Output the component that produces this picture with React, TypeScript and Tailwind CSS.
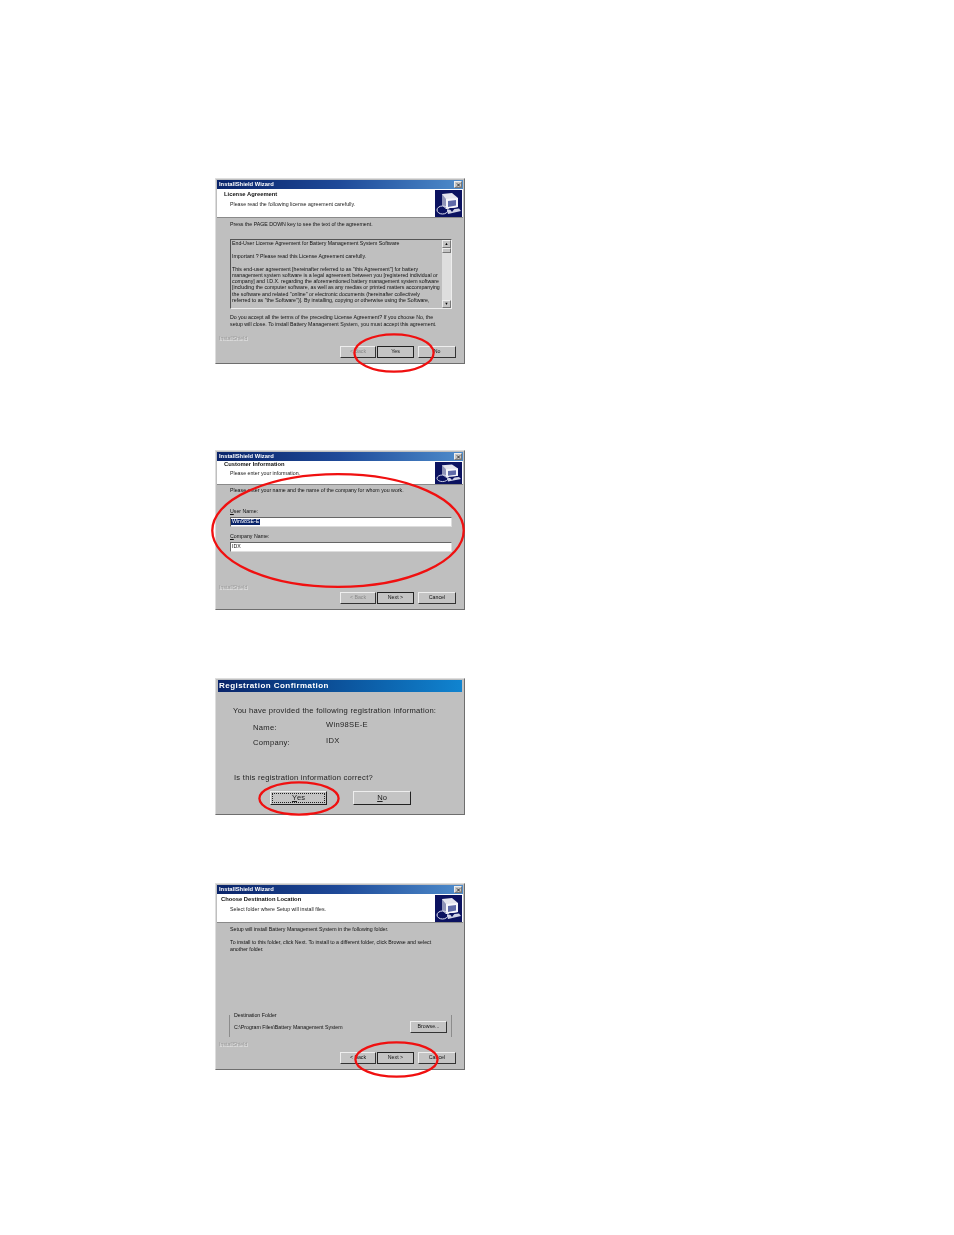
import type { ReactNode } from "react"

const font = "font-['Liberation_Sans',Arial,sans-serif]"

function TitleBar() {
  return (
    <div className="mx-[1px] mt-[1px] h-[9px] flex items-center justify-between pl-[2px] pr-[1px] bg-gradient-to-r from-[#0a246a] via-[#1f4a99] to-[#4f8ccb]">
      <span className="text-[5.8px] leading-none font-bold text-white">InstallShield Wizard</span>
      <span className="w-[8px] h-[7px] bg-[#c6c6c6] border border-[#777] border-t-[#eee] border-l-[#eee] flex items-center justify-center">
        <svg viewBox="0 0 6 5" className="w-[5px] h-[4px]">
          <path d="M1 0.5 L5 4.5 M5 0.5 L1 4.5" stroke="#111" strokeWidth="1" />
        </svg>
      </span>
    </div>
  )
}

function SetupIcon({ h }: { h: string }) {
  return (
    <svg viewBox="0 0 27 27" preserveAspectRatio="none" className={`w-[27px] ${h} shrink-0`}>
      <rect width="27" height="27" fill="#0b1260" />
      <path d="M7 4 L17 3 L23 8 L23 17 L11 19 L7 15 Z" fill="#e4e4ee" />
      <path d="M7 4 L11 9 L11 19 L7 15 Z" fill="#8f93b8" />
      <path d="M11 9 L23 8 L23 17 L11 19 Z" fill="#f6f6fb" />
      <path d="M13 11 L21 10 L21 15.5 L13 17 Z" fill="#5f6aa8" />
      <path d="M12 20 L24 18.5 L26 21 L13 24 Z" fill="#cfd2e6" />
      <ellipse cx="7.5" cy="20" rx="5.5" ry="4" fill="none" stroke="#dfe2f2" strokeWidth="1" />
      <path d="M14 18 L17 22 L20 18 Z" fill="#0b1260" />
    </svg>
  )
}

function Header({ title, sub, titleClass, subClass, h, iconH }: { title: string; sub: string; titleClass: string; subClass: string; h: string; iconH: string }) {
  return (
    <div className={`mx-[1px] ${h} bg-white border-b border-[#8a8a8a] flex items-center justify-between pr-[1px]`}>
      <div className={`self-start ${titleClass}`}>
        <div className="text-[5.8px] leading-[6px] font-bold text-[#111] whitespace-nowrap">{title}</div>
        <div className={`text-[5.25px] leading-[6px] text-[#222] whitespace-nowrap ${subClass}`}>{sub}</div>
      </div>
      <SetupIcon h={iconH} />
    </div>
  )
}

function Btn({ label, w = "w-[37px]", dim, strong }: { label: string; w?: string; dim?: boolean; strong?: boolean }) {
  return (
    <div
      className={`${w} h-[12px] flex items-center justify-center text-[5.25px] leading-none bg-[#c4c4c4] border ${
        strong ? "border-[#222]" : "border-t-[#eee] border-l-[#eee] border-r-[#333] border-b-[#333]"
      } ${dim ? "text-[#8a8a8a]" : "text-[#111]"}`}
    >
      {label}
    </div>
  )
}

function Footer({ gapClass, children }: { gapClass: string; children: ReactNode }) {
  return (
    <div className="absolute left-[1px] right-[1px] bottom-0">
      <div className="pl-[2px] text-[5.25px] leading-[6px] text-[#9c9c9c] [text-shadow:0.5px_0.5px_0_#ececec]">InstallShield</div>
      <div className={`flex justify-end gap-[1px] pr-[7px] pb-[5px] ${gapClass}`}>{children}</div>
    </div>
  )
}

function RedEllipse({ className }: { className: string }) {
  return (
    <svg viewBox="0 0 100 100" preserveAspectRatio="none" className={`absolute overflow-visible pointer-events-none ${className}`}>
      <ellipse cx="50" cy="50" rx="49.5" ry="49" fill="none" stroke="#f01010" strokeWidth="2.3" vectorEffect="non-scaling-stroke" />
    </svg>
  )
}

function Frame({ h, children }: { h: string; children: ReactNode }) {
  return <div className={`relative w-[250px] ${h} bg-[#bfbfbf] border border-[#6e6e6e] border-t-[#ddd] border-l-[#ddd]`}>{children}</div>
}

function LicenseDialog() {
  return (
    <Frame h="h-[186px]">
      <TitleBar />
      <Header h="h-[29px]" iconH="h-[27px]" title="License Agreement" sub="Please read the following license agreement carefully." titleClass="pl-[7px] pt-[2px]" subClass="mt-[4px] ml-[6px]" />
      <div className="pl-[14px] pt-[3px] text-[5.25px] leading-[6px] text-[#111]">Press the PAGE DOWN key to see the text of the agreement.</div>
      <div className="ml-[14px] mt-[12px] w-[222px] h-[70px] border border-[#555] border-r-[#eee] border-b-[#eee] flex">
        <div className="flex-1 pl-[1px] text-[5.25px] leading-[6.1px] text-[#111] whitespace-nowrap overflow-hidden">
          <div>End-User License Agreement for Battery Management System Software</div>
          <div className="mt-[7px]">Important ? Please read this License Agreement carefully.</div>
          <div className="mt-[7px]">This end-user agreement [hereinafter referred to as "this Agreement"] for battery</div>
          <div>management system software is a legal agreement between you [registered individual or</div>
          <div>company] and I.D.X. regarding the aforementioned battery management system software</div>
          <div>[including the computer software, as well as any medias or printed matters accompanying</div>
          <div>the software and related "online" or electronic documents (hereinafter collectively</div>
          <div>referred to as "the Software")]. By installing, copying or otherwise using the Software,</div>
        </div>
        <div className="w-[9px] bg-[#dedede] flex flex-col justify-between">
          <div>
            <div className="h-[8px] bg-[#c4c4c4] border border-[#777] border-t-[#eee] border-l-[#eee] flex items-center justify-center text-[4px] leading-none text-black">▲</div>
            <div className="h-[5px] bg-[#c4c4c4] border border-[#777] border-t-[#eee] border-l-[#eee]" />
          </div>
          <div className="h-[8px] bg-[#c4c4c4] border border-[#777] border-t-[#eee] border-l-[#eee] flex items-center justify-center text-[4px] leading-none text-black">▼</div>
        </div>
      </div>
      <div className="pl-[14px] pt-[5px] text-[5.25px] leading-[7px] text-[#111] whitespace-nowrap">
        <div>Do you accept all the terms of the preceding License Agreement? If you choose No, the</div>
        <div>setup will close. To install Battery Management System, you must accept this agreement.</div>
      </div>
      <Footer gapClass="pt-[5px]">
        <Btn label="< Back" w="w-[36px]" dim />
        <Btn label="Yes" strong />
        <div className="w-[2px]" />
        <Btn label="No" w="w-[38px]" />
      </Footer>
    </Frame>
  )
}

function CustomerDialog() {
  return (
    <Frame h="h-[160px]">
      <TitleBar />
      <Header h="h-[24px]" iconH="h-[22px]" title="Customer Information" sub="Please enter your information." titleClass="pl-[7px]" subClass="mt-[3px] ml-[6px]" />
      <div className="pl-[14px] pt-[2px] text-[5.25px] leading-[6px] text-[#111]">Please enter your name and the name of the company for whom you work.</div>
      <div className="pl-[14px] pt-[15px] text-[5.25px] leading-[6px] text-[#111]"><u>U</u>ser Name:</div>
      <div className="ml-[14px] mt-[3px] w-[222px] h-[10px] bg-white border border-[#666] border-r-[#ddd] border-b-[#ddd] flex items-center text-[5.25px] leading-none">
        <span className="bg-[#0a246a] text-white px-[1px]">Win98SE-E</span>
      </div>
      <div className="pl-[14px] pt-[6px] text-[5.25px] leading-[6px] text-[#111]"><u>C</u>ompany Name:</div>
      <div className="ml-[14px] mt-[3px] w-[222px] h-[10px] bg-white border border-[#666] border-r-[#ddd] border-b-[#ddd] flex items-center pl-[1px] text-[5.25px] leading-none text-[#111]">IDX</div>
      <Footer gapClass="pt-[2px]">
        <Btn label="< Back" w="w-[36px]" dim />
        <Btn label="Next >" strong />
        <div className="w-[2px]" />
        <Btn label="Cancel" w="w-[38px]" />
      </Footer>
    </Frame>
  )
}

function ConfirmDialog() {
  return (
    <div className="relative w-[250px] h-[137px] bg-[#c0c0c0] border border-[#6e6e6e] border-t-[#ddd] border-l-[#ddd]">
      <div className="mx-[2px] mt-[1px] h-[12px] flex items-center pl-[1px] bg-gradient-to-r from-[#0a246a] to-[#1084d0]">
        <span className="text-[8px] leading-none font-bold text-white tracking-[0.45px]">Registration Confirmation</span>
      </div>
      <div className="pl-[17px] pt-[14px] text-[7.6px] leading-[9px] text-[#222] tracking-[0.26px] whitespace-nowrap">You have provided the following registration information:</div>
      <div className="grid grid-cols-[73px_1fr] pl-[37px] pt-[5px] text-[7.6px] leading-[9px] text-[#222] tracking-[0.3px]">
        <div className="pt-[3px]">Name:</div>
        <div>Win98SE-E</div>
        <div className="pt-[6px]">Company:</div>
        <div className="pt-[4px]">IDX</div>
      </div>
      <div className="pl-[18px] pt-[26px] text-[7.6px] leading-[9px] text-[#222] tracking-[0.25px] whitespace-nowrap">Is this registration information correct?</div>
      <div className="flex gap-[26px] pl-[54px] pt-[9px]">
        <div className="w-[57px] h-[14px] p-[1px] bg-[#c4c4c4] border border-t-[#eee] border-l-[#eee] border-r-[#222] border-b-[#222]">
          <div className="h-full border border-dotted border-[#222] flex items-center justify-center text-[7.6px] leading-none text-[#222]"><u>Y</u>es</div>
        </div>
        <div className="w-[58px] h-[14px] bg-[#c4c4c4] border border-t-[#eee] border-l-[#eee] border-r-[#222] border-b-[#222] flex items-center justify-center text-[7.6px] leading-none text-[#222]"><u>N</u>o</div>
      </div>
    </div>
  )
}

function DestinationDialog() {
  return (
    <Frame h="h-[187px]">
      <TitleBar />
      <Header h="h-[29px]" iconH="h-[27px]" title="Choose Destination Location" sub="Select folder where Setup will install files." titleClass="pl-[4px] pt-[2px]" subClass="mt-[4px] ml-[9px]" />
      <div className="pl-[14px] pt-[3px] text-[5.25px] leading-[6px] text-[#111]">Setup will install Battery Management System in the following folder.</div>
      <div className="pl-[14px] pt-[7px] text-[5.25px] leading-[7px] text-[#111] whitespace-nowrap">
        <div>To install to this folder, click Next. To install to a different folder, click Browse and select</div>
        <div>another folder.</div>
      </div>
      <div className="ml-[13px] mt-[62px] w-[223px] h-[22px] border-l border-r border-[#8c8c8c] flex justify-between pl-[4px] pr-[4px] text-[5.25px] leading-[6px] text-[#111]">
        <div className="-mt-[3px]">
          <div>Destination Folder</div>
          <div className="mt-[6px]">C:\Program Files\Battery Management System</div>
        </div>
        <div className="pt-[6px]"><Btn label="Browse..." /></div>
      </div>
      <Footer gapClass="pt-[5px]">
        <Btn label="< Back" w="w-[36px]" />
        <Btn label="Next >" strong />
        <div className="w-[2px]" />
        <Btn label="Cancel" w="w-[38px]" />
      </Footer>
    </Frame>
  )
}

export default function App() {
  return (
    <div className={`relative w-[954px] h-[1235px] bg-white overflow-hidden blur-[0.3px] ${font}`}>
      <div className="flex flex-col pl-[215px] pt-[178px]">
        <LicenseDialog />
        <div className="h-[86px]" />
        <CustomerDialog />
        <div className="h-[68px]" />
        <ConfirmDialog />
        <div className="h-[68px]" />
        <DestinationDialog />
      </div>
      <RedEllipse className="left-[354px] top-[334px] w-[80px] h-[38px]" />
      <RedEllipse className="left-[211px] top-[473px] w-[254px] h-[115px]" />
      <RedEllipse className="left-[259px] top-[782px] w-[80px] h-[33px]" />
      <RedEllipse className="left-[355px] top-[1042px] w-[83px] h-[35px]" />
    </div>
  )
}
